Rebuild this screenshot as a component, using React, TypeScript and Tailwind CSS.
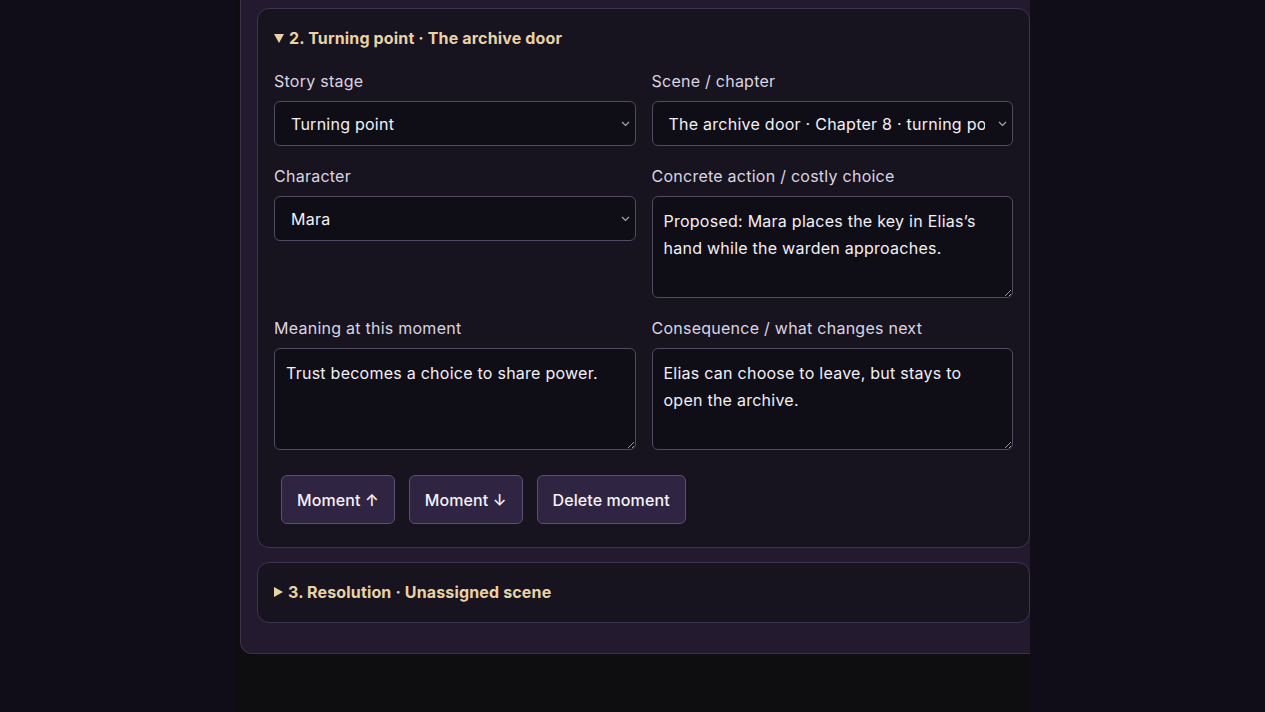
import React from "react"

const font = { fontFamily: "Inter, 'Noto Sans', 'Liberation Sans', sans-serif" }

function Caret({ open }: { open: boolean }) {
  return open ? (
    <svg width="10" height="9" viewBox="0 0 10 9" className="mr-[5px] shrink-0">
      <path d="M0 0 H10 L5 9 Z" fill="#e9d2a4" />
    </svg>
  ) : (
    <svg width="9" height="10" viewBox="0 0 9 10" className="mr-[5px] shrink-0">
      <path d="M0 0 L9 5 L0 10 Z" fill="#e9d2a4" />
    </svg>
  )
}

function Field({ label, children }: { label: string; children: React.ReactNode }) {
  return (
    <label className="flex flex-col">
      <span className="mb-2 text-base leading-6 text-[#dbd5e2]">{label}</span>
      {children}
    </label>
  )
}

function Select({ value }: { value: string }) {
  return (
    <div className="relative">
      <select
        defaultValue={value}
        className="h-[45px] w-full appearance-none rounded-md border border-[#514a62] bg-[#0f0d16] pl-4 pr-[27px] text-base tracking-[0.25px] text-[#f3f0f7] outline-none"
      >
        <option>{value}</option>
      </select>
      <svg
        width="9"
        height="6"
        viewBox="0 0 9 6"
        className="pointer-events-none absolute right-[6px] top-[20px]"
      >
        <path d="M1 1 L4.5 4.5 L8 1" fill="none" stroke="#a9a3b4" strokeWidth="1.2" />
      </svg>
    </div>
  )
}

function Area({ value }: { value: string }) {
  return (
    <textarea
      defaultValue={value}
      className="h-[102px] w-full rounded-md border border-[#514a62] bg-[#0f0d16] px-[11px] pt-[11px] text-base leading-[27px] tracking-[0.25px] text-[#f3f0f7] outline-none"
    />
  )
}

function Btn({ children }: { children: React.ReactNode }) {
  return (
    <button className="h-[49px] rounded-md border border-[#5d5070] bg-[#2f2442] px-[15px] text-base font-medium tracking-[0.1px] text-[#f6f2fa]">
      {children}
    </button>
  )
}

export default function App() {
  return (
    <div className="flex h-[712px] overflow-hidden bg-[#100d18] tracking-[0.25px]" style={font}>
      <div className="ml-[235px] flex h-[712px] w-[795px] flex-col overflow-hidden bg-[#0e0d10]">
        <div className="ml-[5px] w-[807px] shrink-0 rounded-b-xl border-x border-b border-[#3b3149] bg-[#231a30] px-4 pb-[30px] pt-2">
          <div className="rounded-xl border border-[#3d3550] bg-[#17131f] px-4 pb-[23px] pt-4">
            <div className="flex items-center text-base font-bold leading-[26px] tracking-[0.15px] text-[#e9d2a4]">
              <Caret open />
              <span>2. Turning point · The archive door</span>
            </div>
            <div className="mt-[18px] grid grid-cols-2 gap-x-4 gap-y-[18px]">
              <Field label="Story stage">
                <Select value="Turning point" />
              </Field>
              <Field label="Scene / chapter">
                <Select value="The archive door · Chapter 8 · turning point" />
              </Field>
              <div className="self-start">
                <Field label="Character">
                  <Select value="Mara" />
                </Field>
              </div>
              <Field label="Concrete action / costly choice">
                <Area value="Proposed: Mara places the key in Elias’s hand while the warden approaches." />
              </Field>
              <Field label="Meaning at this moment">
                <Area value="Trust becomes a choice to share power." />
              </Field>
              <Field label="Consequence / what changes next">
                <Area value="Elias can choose to leave, but stays to open the archive." />
              </Field>
            </div>
            <div className="mt-[25px] flex gap-[14px] pl-[7px]">
              <Btn>Moment ↑</Btn>
              <Btn>Moment ↓</Btn>
              <Btn>Delete moment</Btn>
            </div>
          </div>
          <div className="mt-[14px] rounded-xl border border-[#3d3550] bg-[#17131f] px-4 pb-[17px] pt-4">
            <div className="flex items-center text-base font-bold leading-[26px] tracking-[0.15px] text-[#e9d2a4]">
              <Caret open={false} />
              <span>3. Resolution · Unassigned scene</span>
            </div>
          </div>
        </div>
      </div>
    </div>
  )
}
